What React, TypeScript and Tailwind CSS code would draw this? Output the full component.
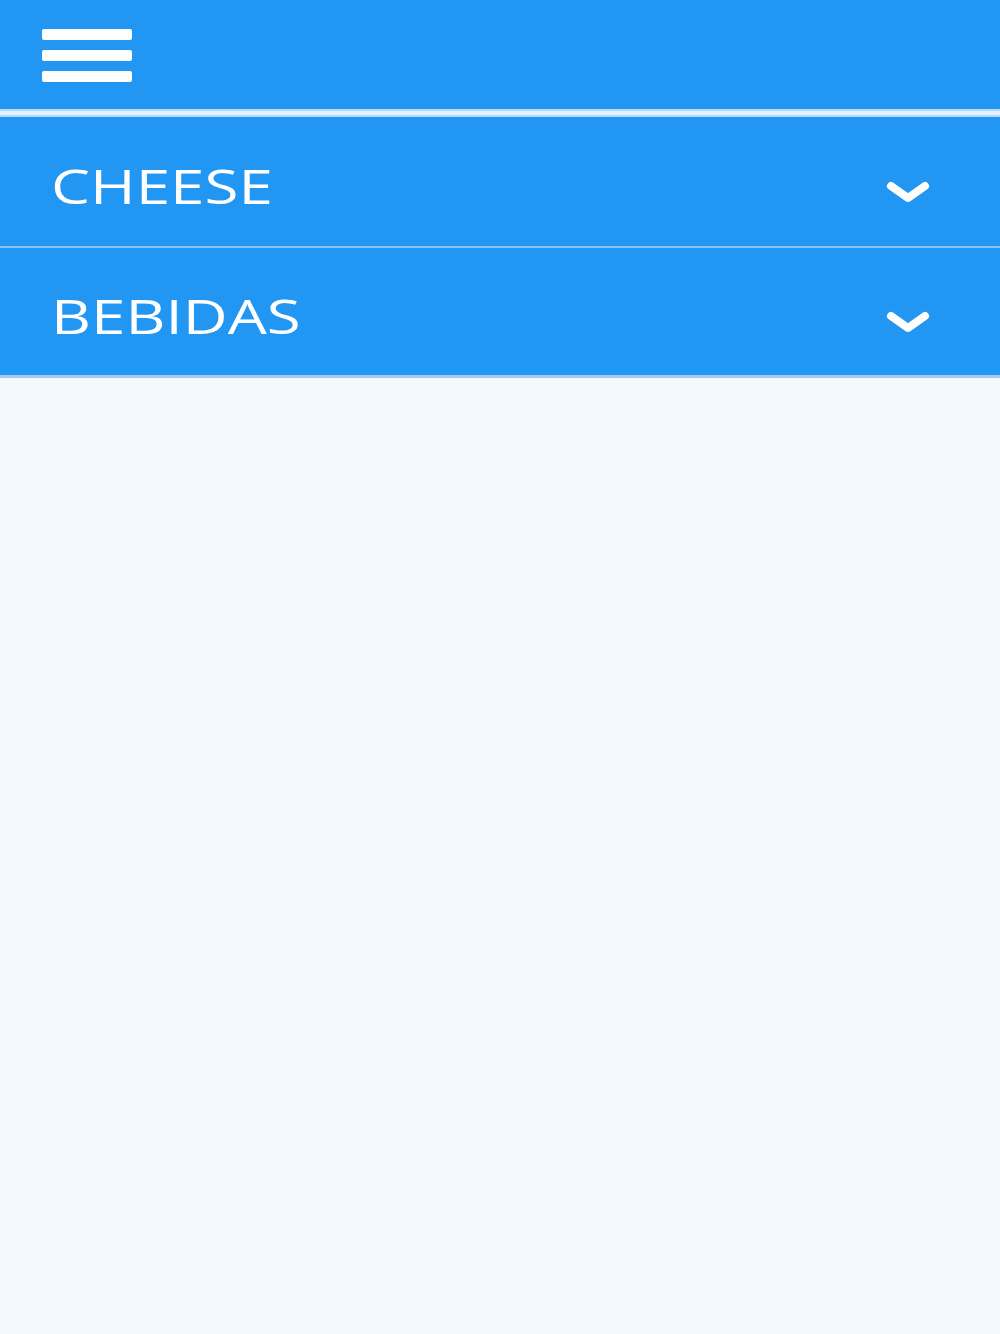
import React from 'react';

const categories = ['CHEESE', 'BEBIDAS'];

function Chevron() {
  return (
    <svg width="46" height="24" viewBox="0 0 46 24" className="block translate-y-[10px]">
      <polyline
        points="6,6 23,18 40,6"
        fill="none"
        stroke="#ffffff"
        strokeWidth="8"
        strokeLinecap="round"
        strokeLinejoin="round"
      />
    </svg>
  );
}

export default function App() {
  return (
    <div className="min-h-[1334px] bg-[#f4f9fd] font-['Open_Sans',sans-serif]">
      {/* top bar */}
      <header className="h-[109px] bg-[#2196f3] pl-[42px] pt-[29px]">
        <div className="flex w-[90px] flex-col gap-[10px]">
          <span className="h-[11px] rounded-[2px] bg-white" />
          <span className="h-[11px] rounded-[2px] bg-white" />
          <span className="h-[11px] rounded-[2px] bg-white" />
        </div>
      </header>
      <div className="h-[8px] border-y-2 border-[#b9dbf9] bg-[#e2f1fd]" />

      {/* category list */}
      <div className="border-b-[3px] border-[#a9cbe8]">
        {categories.map((name, i) => (
          <div
            key={name}
            className={`flex h-[129px] items-center justify-between bg-[#2196f3] pl-[51px] pr-[69px] ${
              i > 0 ? 'border-t-2 border-[#8cc1ee]' : ''
            }`}
          >
            <span className="origin-left translate-y-[4px] scale-x-[1.29] text-[48px] leading-none text-white">
              {name}
            </span>
            <Chevron />
          </div>
        ))}
      </div>
    </div>
  );
}
